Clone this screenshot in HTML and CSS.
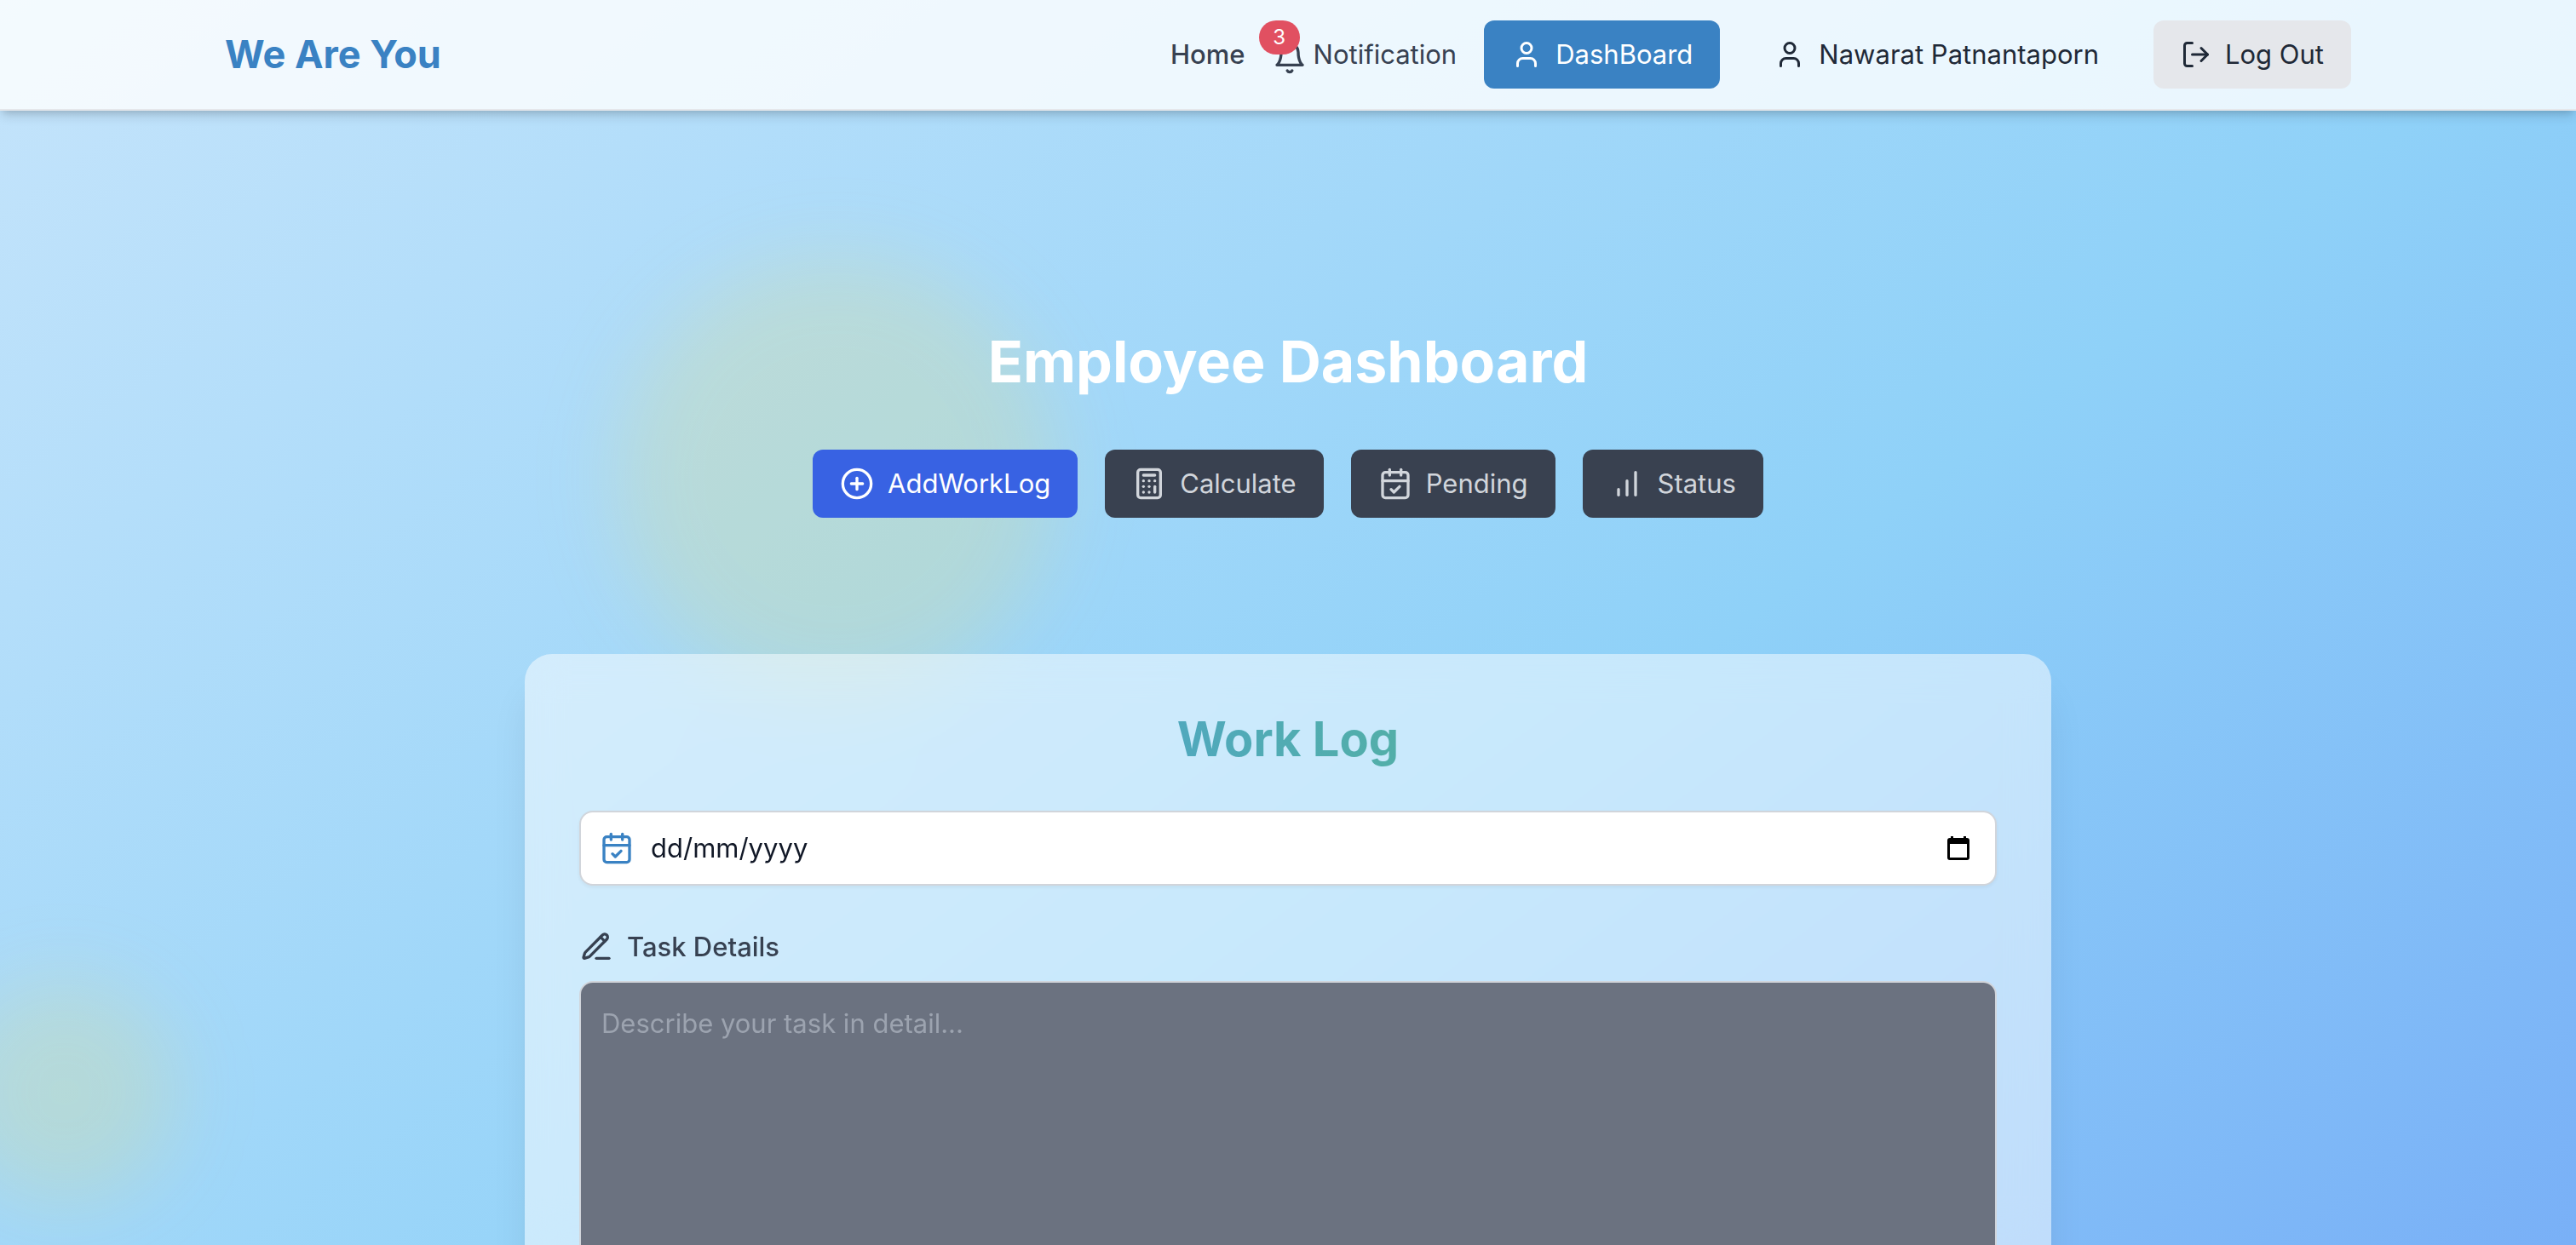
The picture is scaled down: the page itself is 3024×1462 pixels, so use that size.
FILE: index.html
```html
<!DOCTYPE html>
<html lang="en">
<head>
<meta charset="utf-8">
<meta name="viewport" content="width=device-width, initial-scale=1">
<title>Employee Dashboard</title>
<link rel="stylesheet" href="styles.css">
</head>
<body>
<div class="page">
  <div class="glow glow-large"></div>
  <div class="glow glow-small"></div>

  <header class="header">
    <div class="header-inner">
      <a class="logo" href="#">We Are You</a>
      <nav class="nav">
        <a class="nav-link nav-home" href="#">Home</a>
        <a class="nav-link notification" href="#">
          <span class="bell">
            <svg class="icon icon-md" viewBox="0 0 24 24"><path d="M6 8a6 6 0 0 1 12 0c0 7 3 9 3 9H3s3-2 3-9"/><path d="M10.3 21a1.94 1.94 0 0 0 3.4 0"/></svg>
            <span class="badge">3</span>
          </span>
          Notification
        </a>
        <a class="button button-primary" href="#">
          <svg class="icon icon-sm" viewBox="0 0 24 24"><path d="M19 21v-2a4 4 0 0 0-4-4H9a4 4 0 0 0-4 4v2"/><circle cx="12" cy="7" r="4"/></svg>
          DashBoard
        </a>
        <a class="button button-plain" href="#">
          <svg class="icon icon-sm" viewBox="0 0 24 24"><path d="M19 21v-2a4 4 0 0 0-4-4H9a4 4 0 0 0-4 4v2"/><circle cx="12" cy="7" r="4"/></svg>
          Nawarat Patnantaporn
        </a>
        <button class="button button-muted" type="button">
          <svg class="icon icon-sm" viewBox="0 0 24 24"><path d="M9 21H5a2 2 0 0 1-2-2V5a2 2 0 0 1 2-2h4"/><path d="m16 17 5-5-5-5"/><path d="M21 12H9"/></svg>
          Log Out
        </button>
      </nav>
    </div>
  </header>

  <main class="main">
    <h1 class="title">Employee Dashboard</h1>
    <div class="tabs">
      <button class="button tab tab-active" type="button">
        <svg class="icon icon-md" viewBox="0 0 24 24"><circle cx="12" cy="12" r="10"/><path d="M8 12h8"/><path d="M12 8v8"/></svg>
        AddWorkLog
      </button>
      <button class="button tab" type="button">
        <svg class="icon icon-md" viewBox="0 0 24 24"><rect width="16" height="20" x="4" y="2" rx="2"/><path d="M8 6h8"/><path d="M16 14v4"/><path d="M16 10h.01"/><path d="M12 10h.01"/><path d="M8 10h.01"/><path d="M12 14h.01"/><path d="M8 14h.01"/><path d="M12 18h.01"/><path d="M8 18h.01"/></svg>
        Calculate
      </button>
      <button class="button tab" type="button">
        <svg class="icon icon-md" viewBox="0 0 24 24"><path d="M8 2v4"/><path d="M16 2v4"/><rect width="18" height="18" x="3" y="4" rx="2"/><path d="M3 10h18"/><path d="m9 16 2 2 4-4"/></svg>
        Pending
      </button>
      <button class="button tab" type="button">
        <svg class="icon icon-md" viewBox="0 0 24 24"><path d="M12 20V10"/><path d="M18 20V4"/><path d="M6 20v-4"/></svg>
        Status
      </button>
    </div>

    <form class="card">
      <h2 class="card-title">Work Log</h2>
      <div class="date-field">
        <svg class="icon icon-md date-icon" viewBox="0 0 24 24"><path d="M8 2v4"/><path d="M16 2v4"/><rect width="18" height="18" x="3" y="4" rx="2"/><path d="M3 10h18"/><path d="m9 16 2 2 4-4"/></svg>
        <input class="date-input" type="text" placeholder="dd/mm/yyyy" aria-label="Date">
        <button class="picker" type="button" aria-label="Open calendar">
          <svg class="picker-icon" viewBox="0 0 26 28"><path fill-rule="evenodd" d="M4 0h3v2h12V0h3v2h1a3 3 0 0 1 3 3v20a3 3 0 0 1-3 3H3a3 3 0 0 1-3-3V5a3 3 0 0 1 3-3h1zM3 9v16h20V9z"/></svg>
        </button>
      </div>
      <div class="field">
        <label class="label" for="details">
          <svg class="icon icon-md" viewBox="0 0 24 24"><path d="M12 20h9"/><path d="M16.376 3.622a1 1 0 0 1 3.002 3.002L7.368 18.635a2 2 0 0 1-.855.506l-2.872.838a.5.5 0 0 1-.62-.62l.838-2.872a2 2 0 0 1 .506-.854z"/><path d="m15 5 3 3"/></svg>
          Task Details
        </label>
        <textarea class="textarea" id="details" rows="8" placeholder="Describe your task in detail..."></textarea>
      </div>
    </form>
  </main>
</div>
</body>
</html>
```

FILE: styles.css
```css
*,
*::before,
*::after {
  box-sizing: border-box;
}

body {
  margin: 0;
  font-family: Inter, "Liberation Sans", sans-serif;
  font-size: 31px;
  line-height: 48px;
  color: #1f2937;
}

h1,
h2 {
  margin: 0;
}

a {
  color: inherit;
  text-decoration: none;
}

button,
input,
textarea {
  font: inherit;
  color: inherit;
}

.page {
  position: relative;
  display: flex;
  flex-direction: column;
  height: 100vh;
  overflow: hidden;
  background: linear-gradient(to bottom right, #c5e4fb, #8fd1f8, #6d9ef6) no-repeat;
  background-size: 100% 154vh;
}

.glow {
  position: absolute;
  border-radius: 50%;
  background: rgba(253, 224, 71, 0.18);
  filter: blur(48px);
}

.glow-large {
  top: 304px;
  left: 24%;
  width: 512px;
  height: 512px;
}

.glow-small {
  bottom: 52px;
  left: -52px;
  width: 256px;
  height: 256px;
}

.icon {
  flex: none;
  fill: none;
  stroke: currentColor;
  stroke-width: 2;
  stroke-linecap: round;
  stroke-linejoin: round;
}

.icon-sm {
  width: 36px;
  height: 36px;
}

.icon-md {
  width: 40px;
  height: 40px;
}

.header {
  position: relative;
  flex: none;
  border-bottom: 2px solid #e5e7eb;
  background: rgba(255, 255, 255, 0.8);
  box-shadow: 0 8px 12px -2px rgba(0, 0, 0, 0.14), 0 4px 8px -4px rgba(0, 0, 0, 0.14);
}

.header-inner {
  display: flex;
  align-items: center;
  justify-content: space-between;
  max-width: 2560px;
  margin: 0 auto;
  padding: 24px 32px;
}

.logo {
  font-size: 45px;
  font-weight: 700;
  color: #3a82c3;
}

.nav {
  display: flex;
  align-items: center;
  gap: 32px;
}

.nav-link {
  color: #374151;
}

.nav-home {
  font-weight: 500;
}

.notification {
  display: flex;
  align-items: flex-end;
  gap: 8px;
}

.bell {
  position: relative;
  display: flex;
}

.badge {
  position: absolute;
  top: -24px;
  left: -16px;
  width: 48px;
  padding: 4px 0;
  border-radius: 20px;
  background: #e15061;
  color: #fff;
  font-size: 24px;
  line-height: 32px;
  text-align: center;
}

.button {
  display: flex;
  align-items: center;
  gap: 16px;
  padding: 16px 32px;
  border: 0;
  border-radius: 12px;
  background: none;
}

.button-primary {
  background: #3a82c3;
  color: #fff;
}

.button-muted {
  background: #e5e7eb;
}

.main {
  position: relative;
  display: flex;
  flex: 1;
  flex-direction: column;
  align-items: center;
  min-height: 0;
  padding: 254px 32px 0;
}

.title {
  margin-bottom: 64px;
  font-size: 68px;
  font-weight: 700;
  line-height: 80px;
  color: #fff;
}

.tabs {
  display: flex;
  gap: 32px;
  margin-bottom: 160px;
}

.tab {
  background: #394150;
  color: #d1d5db;
}

.tab-active {
  background: #3862e3;
  color: #fff;
}

.card {
  display: flex;
  flex-direction: column;
  gap: 48px;
  width: 100%;
  max-width: 1792px;
  padding: 64px;
  border-radius: 32px;
  background: rgba(255, 255, 255, 0.5);
  box-shadow: 0 40px 50px -10px rgba(0, 0, 0, 0.1), 0 16px 20px -12px rgba(0, 0, 0, 0.1);
  backdrop-filter: blur(24px);
}

.card-title {
  font-size: 56px;
  font-weight: 700;
  line-height: 72px;
  text-align: center;
  color: transparent;
  background: linear-gradient(to right, #4b99f5, #57be70);
  background-clip: text;
}

.date-field {
  display: flex;
  align-items: center;
  height: 88px;
  padding: 0 30px 0 22px;
  border: 2px solid #d1d5db;
  border-radius: 16px;
  background: #fff;
  box-shadow: 0 2px 4px rgba(0, 0, 0, 0.05);
}

.date-icon {
  margin-right: 20px;
  color: #3a82c3;
}

.date-input {
  flex: 1;
  min-width: 0;
  padding: 0;
  border: 0;
  background: none;
}

.date-input::placeholder {
  color: #111827;
  opacity: 1;
}

.picker {
  display: flex;
  padding: 0;
  border: 0;
  background: none;
}

.picker-icon {
  width: 26px;
  height: 28px;
}

.field {
  display: flex;
  flex-direction: column;
  gap: 16px;
}

.label {
  display: flex;
  align-items: center;
  gap: 16px;
  font-weight: 500;
  color: #374151;
}

.textarea {
  width: 100%;
  padding: 24px;
  border: 2px solid #d1d5db;
  border-radius: 16px;
  background: #6b7280;
  resize: none;
}

.textarea::placeholder {
  color: #9ca3af;
  opacity: 1;
}
```
